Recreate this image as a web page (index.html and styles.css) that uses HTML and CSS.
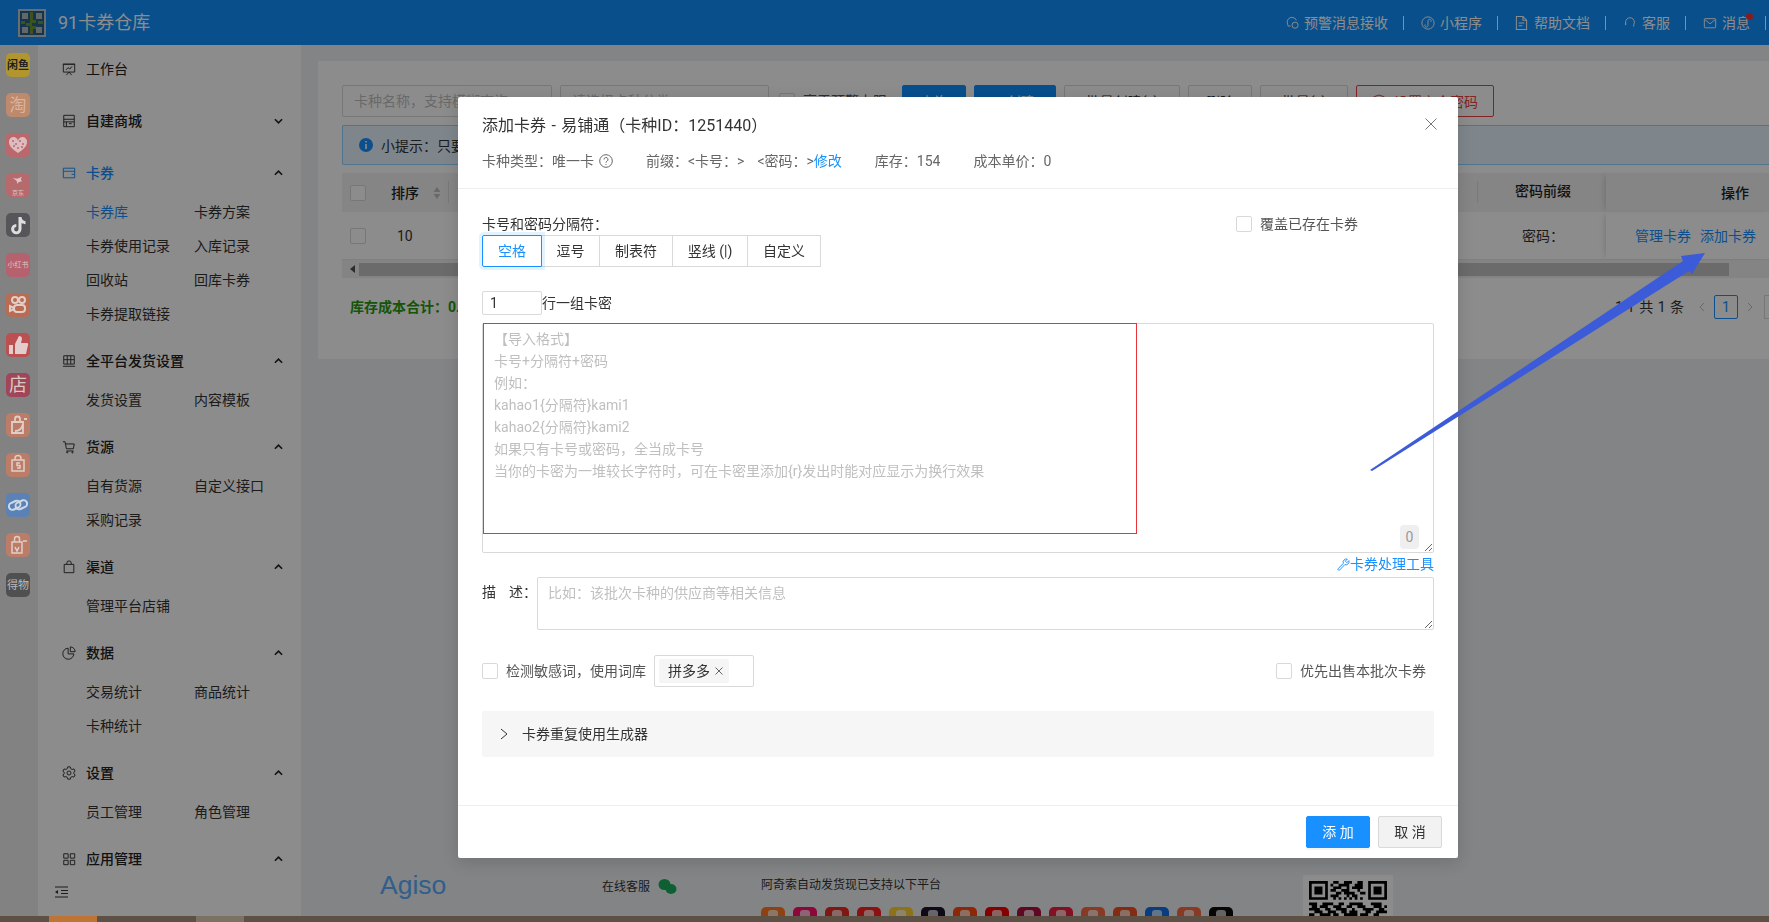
FILE: index.html
```html
<!DOCTYPE html>
<html lang="zh-CN">
<head>
  <meta charset="UTF-8">
  <title>91卡券仓库</title>
  <link rel="stylesheet" href="styles.css">
</head>
<body>

  <div class="page">
    <!-- Top bar -->
    <header class="topbar">
      <div class="brand">
        <svg class="brand-logo" viewBox="0 0 28 28">
          <rect width="28" height="28" fill="#c4c9cc"/>
          <path d="M2 2h24v24H2z" fill="#26618f"/>
          <path d="M4 4h6v6H4zM18 4h6v6h-6zM4 18h6v6H4zM18 18h6v6h-6z" fill="#b5bcc2"/>
          <path d="M12 3h3v8h3v3h-4v3h4v3h-3v5h-3v-8H8v-3h4zM20 12h5v3h-5zM3 12h4v3H3z" fill="#6d9a32"/>
        </svg>
        <span class="brand-name">91卡券仓库</span>
      </div>
      <nav class="topnav">
        <a><svg class="ico" viewBox="0 0 16 16"><path d="M8 1.500a5.500 5.500 0 0 0-5.500 5.500c0 2 1 3.300 1 4.500h3M8 1.500a5.500 5.500 0 0 1 5 3.500"/><circle cx="11.500" cy="10.500" r="3.500"/><path d="M10 10.500h.01M13 10.500h.01"/></svg>预警消息接收</a>
        <a><svg class="ico" viewBox="0 0 16 16"><circle cx="8" cy="8" r="7"/><path d="M5 9.500a1.800 1.800 0 1 0 3 1.300V5.500a1.800 1.800 0 1 1 3 1.300"/></svg>小程序</a>
        <a><svg class="ico ico-doc" viewBox="0 0 14 16"><path d="M1.500 1h7l4 4v10h-11zM8.500 1v4h4M4 8h6M4 11h4"/></svg>帮助文档</a>
        <a><svg class="ico" viewBox="0 0 14 16"><path d="M2 10V7a5 5 0 0 1 10 0c0 2-1 3-1 5"/><path d="M2 7.500v3"/></svg>客服</a>
        <a class="msg"><svg class="ico" viewBox="0 0 16 16"><rect x="1.500" y="3" width="13" height="10.500" rx="1"/><path d="M2 4l6 5 6-5"/></svg>消息<i class="dot"></i></a>
      </nav>
    </header>

    <div class="layout">
      <!-- Platform icons -->
      <div class="platforms">
        <span class="plat plat-xy">闲鱼</span>
        <span class="plat plat-tb">淘</span>
        <span class="plat plat-hb"><svg viewBox="0 0 24 24"><path d="M12 20C6 16 3 13 3 9a4.500 4.500 0 0 1 9-1 4.500 4.500 0 0 1 9 1c0 4-3 7-9 11z" fill="#dcbcbe"/><path d="M7 8h.01M10 11h.01M14 8h.01M17 11h.01M12 15h.01M8 13h.01M16 14h.01" stroke="#bb686c" stroke-width="2" stroke-linecap="round"/></svg></span>
        <span class="plat plat-jd"><svg viewBox="0 0 24 24"><path d="M4 6l7 1 7-3-2 4 2 3-5 1-2 3-1-5z" fill="#dcc6c6"/></svg><b>京东</b></span>
        <span class="plat plat-dy"><svg viewBox="0 0 24 24"><path d="M12.500 4h3c.3 2.500 1.800 4 4 4.300v3c-1.500 0-3-.4-4-1.200v6a5.200 5.200 0 1 1-5.200-5.200v3.100a2.200 2.200 0 1 0 2.200 2.100z" fill="#ddd"/></svg></span>
        <span class="plat plat-xhs">小红书</span>
        <span class="plat plat-ks"><svg viewBox="0 0 24 24" fill="none" stroke="#e2cec6" stroke-width="2"><circle cx="9" cy="7" r="3"/><circle cx="16" cy="7" r="3"/><rect x="8" y="12" width="11" height="7" rx="3"/><path d="M8 15l-4-2v5l4-2"/></svg></span>
        <span class="plat plat-zan"><svg viewBox="0 0 24 24"><path d="M9 11l4-8c2 0 3 1 3 3l-1 4h6c1 0 1.500 1 1 2l-2 9H9zM3 12h4v9H3z" fill="#e2cccc"/></svg></span>
        <span class="plat plat-dian">店</span>
        <span class="plat plat-bag"><svg viewBox="0 0 24 24" fill="none" stroke="#e2cec6" stroke-width="1.800"><path d="M6 9h11v11H6zM9 9V6a2.500 2.500 0 0 1 5 0v3M9 18c4 0 7-3 8-7M18 6h3"/></svg></span>
        <span class="plat plat-sp"><svg viewBox="0 0 24 24" fill="none" stroke="#e2cec6" stroke-width="1.500"><path d="M6 7h12v11H6zM9 7V5.500a3 3 0 0 1 6 0V7M14 10h-3v2.500h3V15h-3"/></svg></span>
        <span class="plat plat-lk"><svg viewBox="0 0 24 24" fill="none" stroke="#d0dae6" stroke-width="2"><rect x="2.500" y="9" width="12" height="7" rx="3.500" transform="rotate(-25 8 12)"/><rect x="9.500" y="8" width="12" height="7" rx="3.500" transform="rotate(-25 16 12)"/></svg></span>
        <span class="plat plat-bag"><svg viewBox="0 0 24 24" fill="none" stroke="#e2cec6" stroke-width="1.500"><path d="M6 9h10v11H6zM8.500 9V6a2.500 2.500 0 0 1 5 0v3M9 14l2 4 2-4M17 8h4"/></svg></span>
        <span class="plat plat-dw">得物</span>
      </div>

      <!-- Side menu -->
      <aside class="sidebar">
        <div class="menu-group">
          <div class="menu-head plain"><svg class="ico" viewBox="0 0 16 16"><path d="M1.500 2.500h13v9h-13zM1 2.500h14M5 15l3-3.500 3 3.500M4.500 9l2.500-2.500 2 1.500 2.500-3"/></svg>工作台</div>
        </div>
        <div class="menu-group">
          <div class="menu-head"><svg class="ico" viewBox="0 0 16 16"><path d="M2 1.500h12v13H2zM2 6h12M2 9h12M5 9v5.500M8 11h3"/></svg>自建商城<svg class="chev" viewBox="0 0 10 6"><path d="M1 1l4 4 4-4"/></svg></div>
        </div>
        <div class="menu-group">
          <div class="menu-head active"><svg class="ico" viewBox="0 0 16 16"><path d="M1.500 2.500h13v11h-13zM1.500 6h13M11 9.500h3"/></svg>卡券<svg class="chev" viewBox="0 0 10 6"><path d="M1 5l4-4 4 4"/></svg></div>
          <div class="submenu">
            <a class="active">卡券库</a><a>卡券方案</a>
            <a>卡券使用记录</a><a>入库记录</a>
            <a>回收站</a><a>回库卡券</a>
            <a>卡券提取链接</a>
          </div>
        </div>
        <div class="menu-group">
          <div class="menu-head"><svg class="ico" viewBox="0 0 16 16"><path d="M2 2h12v9.500H2zM2 6.500h12M6 2v9.500M10 2v9.500M1 14h14"/></svg>全平台发货设置<svg class="chev" viewBox="0 0 10 6"><path d="M1 5l4-4 4 4"/></svg></div>
          <div class="submenu">
            <a>发货设置</a><a>内容模板</a>
          </div>
        </div>
        <div class="menu-group">
          <div class="menu-head"><svg class="ico" viewBox="0 0 16 16"><path d="M1 2h2.500l1.500 8h8l1-5.500H4M5 12.500h8"/><circle cx="6" cy="14" r=".8"/><circle cx="12" cy="14" r=".8"/></svg>货源<svg class="chev" viewBox="0 0 10 6"><path d="M1 5l4-4 4 4"/></svg></div>
          <div class="submenu">
            <a>自有货源</a><a>自定义接口</a>
            <a>采购记录</a>
          </div>
        </div>
        <div class="menu-group">
          <div class="menu-head"><svg class="ico" viewBox="0 0 16 16"><path d="M2.500 5h11v9.500h-11zM5.500 5V3.500a2.500 2.500 0 0 1 5 0V5"/></svg>渠道<svg class="chev" viewBox="0 0 10 6"><path d="M1 5l4-4 4 4"/></svg></div>
          <div class="submenu">
            <a>管理平台店铺</a>
          </div>
        </div>
        <div class="menu-group">
          <div class="menu-head"><svg class="ico" viewBox="0 0 16 16"><path d="M7 2.500a6.300 6.300 0 1 0 6.500 6.500H7zM9.500 1a5.500 5.500 0 0 1 5.500 5.500H9.500z"/></svg>数据<svg class="chev" viewBox="0 0 10 6"><path d="M1 5l4-4 4 4"/></svg></div>
          <div class="submenu">
            <a>交易统计</a><a>商品统计</a>
            <a>卡种统计</a>
          </div>
        </div>
        <div class="menu-group">
          <div class="menu-head"><svg class="ico" viewBox="0 0 16 16"><path d="M6.500 1h3l.4 2 1.700 1 2-.7 1.400 2.600-1.500 1.300v1.600l1.500 1.300-1.400 2.600-2-.7-1.700 1-.4 2h-3l-.4-2-1.700-1-2 .7L1 10.100l1.500-1.300V7.200L1 5.900l1.400-2.600 2 .7 1.700-1z"/><circle cx="8" cy="8" r="2.300"/></svg>设置<svg class="chev" viewBox="0 0 10 6"><path d="M1 5l4-4 4 4"/></svg></div>
          <div class="submenu">
            <a>员工管理</a><a>角色管理</a>
          </div>
        </div>
        <div class="menu-group">
          <div class="menu-head"><svg class="ico" viewBox="0 0 16 16"><path d="M2 2h5v5H2zM9.500 2h5v5h-5zM2 9.500h5v5H2zM9.500 9.500h5v5h-5z"/></svg>应用管理<svg class="chev" viewBox="0 0 10 6"><path d="M1 5l4-4 4 4"/></svg></div>
        </div>
        <div class="collapse-btn"><svg viewBox="0 0 13 12"><path d="M0 1h13M6 4.500h7M6 7.500h7M0 11h13"/><path d="M3 4v4L0 6z" fill="#333" stroke="none"/></svg></div>
      </aside>

      <!-- Main content behind the dialog -->
      <main class="main">
        <div class="card">
          <div class="toolbar">
            <div class="fake-input w-name">卡种名称，支持模糊查询</div>
            <div class="fake-input w-type">请选择卡种分类</div>
            <label class="check-label tb-check"><i class="check"></i>高于预警上限</label>
            <button class="btn primary w-search">查询</button>
            <button class="btn primary w-create">+ 创建</button>
            <button class="btn w-batch">批量创建(x)</button>
            <button class="btn w-del">删除</button>
            <button class="btn w-batch2">批量(x)</button>
            <button class="btn danger w-safe"><svg class="shield" viewBox="0 0 14 14"><path d="M7 1l5.500 2v4c0 3-2.500 5-5.500 6-3-1-5.500-3-5.500-6V3z"/></svg>设置安全密码</button>
          </div>
          <div class="alert"><svg class="alert-ico" viewBox="0 0 14 14"><circle cx="7" cy="7" r="7" fill="#1890ff"/><path d="M6.200 3h1.600v1.600H6.200zM6.200 6h1.600v5H6.200z" fill="#fff"/></svg>小提示：只要添加了卡券</div>
          <div class="table">
            <div class="tr th">
              <div><i class="check"></i></div>
              <div class="col-sort">排序<svg class="sort" viewBox="0 0 8 14"><path d="M4 1l3.500 5h-7zM4 13L.5 8h7z"/></svg></div>
              <div></div>
              <div class="col-prefix">密码前缀</div>
              <div class="col-op">操作</div>
            </div>
            <div class="tr td">
              <div><i class="check"></i></div>
              <div class="col-num">10</div>
              <div></div>
              <div class="col-pw">密码：</div>
              <div class="col-op"><a>管理卡券</a><a>添加卡券</a></div>
            </div>
            <div class="hscroll">
              <svg class="hscroll-arrow" viewBox="0 0 5 8"><path d="M5 0v8L0 4z"/></svg>
              <div class="hscroll-thumb"></div>
            </div>
          </div>
          <div class="summary">
            <span class="cost">库存成本合计：0.00</span>
            <div class="pager">
              <span class="pager-total">1-1 共 1 条</span>
              <svg class="pager-arrow" viewBox="0 0 6 10"><path d="M5 1L1 5l4 4"/></svg>
              <span class="pager-num">1</span>
              <svg class="pager-arrow" viewBox="0 0 6 10"><path d="M1 1l4 4-4 4"/></svg>
              <span class="pager-size"></span>
            </div>
          </div>
        </div>

        <footer class="site-footer">
          <div class="agiso">Agiso</div>
          <div class="service">在线客服
            <svg class="wechat" viewBox="0 0 19 15"><ellipse cx="6.500" cy="5.500" rx="6" ry="5.500" fill="#1aaf5d"/><ellipse cx="13" cy="10" rx="5.500" ry="5" fill="#1aaf5d"/></svg>
          </div>
          <div class="support">
            <div class="support-title">阿奇索自动发货现已支持以下平台</div>
            <div class="support-icons">
              <span class="c1"></span><span class="c2"></span><span class="c3"></span><span class="c4"></span><span class="c5"></span>
              <span class="c6"></span><span class="c7"></span><span class="c8"></span><span class="c9"></span><span class="c10"></span>
              <span class="c11"></span><span class="c12"></span><span class="c13"></span><span class="c11"></span><span class="c14"></span>
            </div>
          </div>
          <div class="qr">
            <svg viewBox="0 0 29 16" fill="none" stroke="#000">
              <path d="M0 .5h7M22 .5h7M0 6.500h7M22 6.500h7M.5 0v7M6.500 0v7M22.500 0v7M28.500 0v7"/>
              <path d="M2 2.500h3M2 3.500h3M2 4.500h3M24 2.500h3M24 3.500h3M24 4.500h3"/>
              <path d="M9 .5h2M13 .5h3M18 .5h2M8 1.500h1M11 1.500h4M17 1.500h3M9 2.500h3M14 2.500h1M16 2.500h4M8 3.500h2M12 3.500h3M18 3.500h1M10 4.500h2M13 4.500h4M19 4.500h2M8 5.500h3M14 5.500h1M16 5.500h2M9 6.500h1M11 6.500h1M13 6.500h1M15 6.500h1M17 6.500h1M19 6.500h1"/>
              <path d="M0 8.500h3M5 8.500h4M11 8.500h2M15 8.500h5M23 8.500h4M1 9.500h2M4 9.500h3M9 9.500h3M14 9.500h2M18 9.500h3M24 9.500h3M28 9.500h1M0 10.500h4M6 10.500h2M10 10.500h4M16 10.500h1M20 10.500h4M26 10.500h2M2 11.500h3M7 11.500h3M12 11.500h2M15 11.500h3M21 11.500h2M25 11.500h4M0 12.500h2M4 12.500h4M9 12.500h2M13 12.500h5M19 12.500h3M24 12.500h2M1 13.500h3M6 13.500h2M10 13.500h3M15 13.500h2M18 13.500h4M23 13.500h3M27 13.500h2M0 14.500h2M3 14.500h3M8 14.500h4M14 14.500h3M19 14.500h2M22 14.500h4M28 14.500h1"/>
            </svg>
          </div>
        </footer>
      </main>
    </div>

    <div class="bottom-bar">
      <i class="seg seg-orange"></i><i class="seg seg-gray"></i>
    </div>
  </div>

  <div class="mask"></div>

  <!-- Add cards dialog -->
  <div class="modal">
    <div class="modal-head">
      <div class="modal-title">添加卡券 - 易铺通（卡种ID：1251440）</div>
      <svg class="modal-close" viewBox="0 0 12 12"><path d="M.5.5l11 11M11.500.5l-11 11"/></svg>
      <div class="modal-info">
        <span class="info-type">卡种类型：唯一卡<svg class="help" viewBox="0 0 14 14"><circle cx="7" cy="7" r="6.300"/><path d="M5 5.500a2 2 0 1 1 3 1.700c-.7.4-1 .8-1 1.500M7 10v.9"/></svg></span>
        <span class="info-prefix">前缀：&lt;卡号：&gt; &lt;密码：&gt;<a class="link">修改</a></span>
        <span>库存：154</span>
        <span>成本单价：0</span>
      </div>
    </div>

    <div class="modal-body">
      <div class="sep-row">
        <div>
          <div class="sep-label">卡号和密码分隔符：</div>
          <div class="radio-group">
            <span class="radio w60 on">空格</span>
            <span class="radio w58">逗号</span>
            <span class="radio w73">制表符</span>
            <span class="radio w75">竖线 (|)</span>
            <span class="radio w73">自定义</span>
          </div>
        </div>
        <label class="check-label overwrite"><i class="check"></i>覆盖已存在卡券</label>
      </div>

      <div class="count-row">
        <input class="count-input" type="text" value="1">
        <span>行一组卡密</span>
      </div>

      <div class="card-area">
        <textarea class="card-text" placeholder="【导入格式】&#10;卡号+分隔符+密码&#10;例如：&#10;kahao1{分隔符}kami1&#10;kahao2{分隔符}kami2&#10;如果只有卡号或密码，全当成卡号&#10;当你的卡密为一堆较长字符时，可在卡密里添加{r}发出时能对应显示为换行效果"></textarea>
        <div class="red-box"></div>
        <span class="char-count">0</span>
      </div>

      <a class="tool-link"><svg class="wrench" viewBox="0 0 14 14"><path d="M12.800 2.800a3.500 3.500 0 0 1-4.500 4.400L3 12.800a1 1 0 0 1-1.700-1.300L6.800 5.700a3.500 3.500 0 0 1 4.300-4.500L9 3.300l1.700 1.700z"/></svg>卡券处理工具</a>

      <div class="desc-row">
        <label class="desc-label"><span>描</span><span>述：</span></label>
        <textarea class="desc-text" placeholder="比如：该批次卡种的供应商等相关信息"></textarea>
      </div>

      <div class="option-row">
        <label class="check-label"><i class="check"></i>检测敏感词，使用词库</label>
        <div class="tag-select">
          <span class="tag">拼多多<svg class="tag-x" viewBox="0 0 8 8"><path d="M.5.5l7 7M7.500.5l-7 7"/></svg></span>
        </div>
        <label class="check-label first-sale"><i class="check"></i>优先出售本批次卡券</label>
      </div>

      <div class="collapse-panel">
        <svg class="panel-arrow" viewBox="0 0 8 12"><path d="M1 1l6 5-6 5"/></svg>
        卡券重复使用生成器
      </div>
    </div>

    <div class="modal-foot">
      <button class="btn-add">添 加</button>
      <button class="btn-cancel">取 消</button>
    </div>
  </div>

  <!-- Annotation arrow drawn over the screenshot -->
  <svg class="note-arrow" viewBox="0 0 1769 922">
    <polygon points="1370,470 1683,261 1681,256 1705,253 1692,274 1689,271 1372,471" fill="#3c5bd8"/>
  </svg>

</body>
</html>
```

FILE: styles.css
```css
* {
  box-sizing: border-box;
}
html, body {
  margin: 0;
  height: 100%;
  overflow: hidden;
}
body {
  font-family: Roboto, "Noto Sans CJK SC", sans-serif;
  font-size: 14px;
  color: #333;
  background: #fff;
}
a {
  text-decoration: none;
}
.page {
  height: 922px;
  display: flex;
  flex-direction: column;
}

/* top bar */
.topbar {
  height: 45px;
  flex: none;
  background: #1090ff;
  display: flex;
  align-items: center;
  justify-content: space-between;
  padding: 0 0 0 18px;
}
.brand {
  display: flex;
  align-items: center;
}
.brand-logo {
  width: 28px;
  height: 28px;
}
.brand-name {
  margin-left: 12px;
  font-size: 18px;
  line-height: 28px;
  color: #fff;
}
.topnav {
  display: flex;
  align-items: center;
  padding-right: 3px;
}
.topnav a {
  display: flex;
  align-items: center;
  height: 14px;
  line-height: 14px;
  padding-right: 15px;
  margin-right: 17px;
  border-right: 1px solid #fff;
  color: #fff;
  position: relative;
}
.topnav a:last-child {
  margin-right: 0;
}
.ico {
  width: 14px;
  height: 14px;
  flex: none;
  fill: none;
  stroke: currentColor;
  stroke-width: 1.1;
}
.topnav .ico {
  margin-right: 5px;
}
.topnav .ico-doc {
  height: 16px;
  width: 13px;
  margin-right: 6px;
}
.dot {
  position: absolute;
  top: -3px;
  right: 12px;
  width: 7px;
  height: 7px;
  border-radius: 50%;
  background: #ff3030;
}

/* layout */
.layout {
  flex: 1;
  display: flex;
  min-height: 0;
}

/* platform strip sits above the dim layer with its own muted colours */
.platforms {
  width: 38px;
  flex: none;
  position: relative;
  z-index: 20;
  background: #828282;
  display: flex;
  flex-direction: column;
  gap: 16px;
  padding: 8px 0 0 6px;
}
.plat {
  width: 24px;
  height: 24px;
  border-radius: 5px;
  display: flex;
  flex-direction: column;
  align-items: center;
  justify-content: center;
  color: #dcc8be;
  font-size: 17px;
  line-height: 1;
  overflow: hidden;
}
.plat svg {
  width: 24px;
  height: 24px;
  flex: none;
}
.plat-xy {
  background: #b0962c;
  color: #222;
  font-size: 11px;
  font-weight: 700;
  white-space: nowrap;
}
.plat-tb {
  background: #bf8a6c;
  color: #dab49e;
}
.plat-hb {
  background: #bb686c;
}
.plat-jd {
  background: #b76a6c;
  position: relative;
}
.plat-jd svg {
  height: 16px;
  width: 16px;
}
.plat-jd b {
  font-size: 6px;
  font-weight: 400;
}
.plat-dy {
  background: #56565a;
}
.plat-xhs {
  background: #b5626e;
  font-size: 7px;
  white-space: nowrap;
}
.plat-ks {
  background: #b86c54;
}
.plat-zan {
  background: #bc4f50;
}
.plat-dian {
  background: #a0465a;
  font-size: 18px;
}
.plat-bag {
  background: #bb7c68;
}
.plat-sp {
  background: #bb7c68;
}
.plat-lk {
  background: #5a82b6;
}
.plat-dw {
  background: #505050;
  color: #bbb;
  font-size: 11px;
  white-space: nowrap;
}

/* side menu */
.sidebar {
  width: 263px;
  flex: none;
  background: #fff;
  padding-top: 7px;
  position: relative;
}
.menu-group {
  margin-bottom: 18px;
}
.menu-head {
  height: 34px;
  display: flex;
  align-items: center;
  padding: 0 18px 2px 24px;
  font-weight: 500;
  color: #222;
}
.menu-head.plain {
  font-weight: 400;
}
.menu-head .ico {
  margin-right: 10px;
  margin-top: 2px;
  color: #333;
}
.menu-head.active,
.menu-head.active .ico {
  color: #1890ff;
}
.chev {
  width: 9px;
  height: 6px;
  margin-left: auto;
  margin-top: 2px;
  fill: none;
  stroke: #222;
  stroke-width: 1.800;
}
.submenu {
  display: grid;
  grid-template-columns: 108px 108px;
  padding-left: 48px;
  margin: 5px 0 -5px;
}
.submenu a {
  height: 34px;
  line-height: 34px;
  color: #333;
}
.submenu a.active {
  color: #1890ff;
}
.collapse-btn {
  position: absolute;
  left: 17px;
  top: 841px;
}
.collapse-btn svg {
  display: block;
  width: 13px;
  height: 12px;
  fill: none;
  stroke: #333;
}

/* main area */
.main {
  flex: 1;
  min-width: 0;
  background: #eff1f3;
  padding: 16px 0 0 17px;
  overflow: hidden;
}
.card {
  height: 298px;
  background: #fff;
  padding: 24px 0 0 24px;
}
.toolbar {
  display: flex;
  align-items: center;
  height: 32px;
}
.fake-input {
  height: 32px;
  line-height: 30px;
  padding: 0 11px;
  border: 1px solid #d9d9d9;
  border-radius: 2px;
  color: #bfbfbf;
}
.w-name {
  width: 210px;
  margin-right: 8px;
}
.w-type {
  width: 209px;
  margin-right: 10px;
}
.tb-check {
  width: 123px;
}
.btn {
  height: 32px;
  padding: 0;
  border: 1px solid #d9d9d9;
  border-radius: 2px;
  background: #fff;
  color: #333;
  font: inherit;
}
.btn.primary {
  background: #1090ff;
  border-color: #1090ff;
  color: #fff;
}
.btn.danger {
  border-color: #f04040;
  color: #f04040;
  display: flex;
  align-items: center;
  justify-content: center;
}
.shield {
  width: 14px;
  height: 14px;
  margin-right: 8px;
  fill: none;
  stroke: #f04040;
}
.w-search {
  width: 64px;
  margin-right: 8px;
}
.w-create {
  width: 82px;
  margin-right: 8px;
}
.w-batch {
  width: 116px;
  margin-right: 8px;
}
.w-del {
  width: 64px;
  margin-right: 8px;
}
.w-batch2 {
  width: 88px;
  margin-right: 8px;
}
.w-safe {
  width: 138px;
}
.alert {
  height: 40px;
  margin-top: 8px;
  display: flex;
  align-items: center;
  padding-left: 16px;
  background: #e6f4ff;
  border: 1px solid #91d5ff;
  border-right: 0;
  border-radius: 2px 0 0 2px;
}
.alert-ico {
  width: 14px;
  height: 14px;
  margin-right: 8px;
}
.table {
  margin-top: 8px;
}
.tr {
  display: grid;
  grid-template-columns: 40px 67px 1fr 129px 163px;
  align-items: center;
}
.th {
  height: 39px;
  background: #f2f2f2;
  font-weight: 500;
  color: #222;
}
.td {
  height: 48px;
  border-bottom: 1px solid #e8e8e8;
}
.tr > div:first-child {
  padding-left: 8px;
  display: flex;
}
.check {
  display: inline-block;
  width: 16px;
  height: 16px;
  flex: none;
  background: #fff;
  border: 1px solid #d9d9d9;
  border-radius: 2px;
}
.col-sort {
  display: flex;
  align-items: center;
  height: 100%;
  padding: 0 0 2px 9px;
  position: relative;
}
.sort {
  width: 8px;
  height: 14px;
  margin-left: 14px;
  margin-top: 2px;
  fill: #bfbfbf;
}
.col-sort::after,
.col-prefix::before,
.col-prefix::after {
  content: "";
  position: absolute;
  width: 1px;
  height: 22px;
  top: 8px;
  background: #ddd;
}
.col-sort::after {
  right: 0;
}
.col-prefix {
  position: relative;
  height: 100%;
  line-height: 37px;
  padding-left: 38px;
}
.col-prefix::before {
  left: 0;
}
.col-prefix::after {
  right: 0;
}
.col-num {
  padding-left: 15px;
}
.col-pw {
  padding: 0 0 2px 45px;
}
.col-op {
  height: 100%;
  display: flex;
  align-items: center;
  justify-content: flex-end;
  padding-bottom: 2px;
  box-shadow: -4px 0 6px -3px rgba(0, 0, 0, 0.15);
}
.th .col-op {
  padding-right: 20px;
}
.td .col-op {
  padding-right: 13px;
  gap: 9px;
}
.col-op a {
  color: #1890ff;
}
.hscroll {
  height: 18px;
  background: #f1f1f1;
  display: flex;
  align-items: center;
  padding-left: 8px;
}
.hscroll-arrow {
  width: 5px;
  height: 8px;
  fill: #505050;
}
.hscroll-thumb {
  width: 1370px;
  height: 13px;
  margin-left: 4px;
  background: #c4c4c4;
}
.summary {
  margin-top: 17px;
  height: 24px;
  display: flex;
  align-items: center;
  justify-content: space-between;
  padding-left: 8px;
}
.cost {
  color: #2a9a10;
  font-weight: 700;
  padding-bottom: 2px;
}
.pager {
  display: flex;
  align-items: center;
}
.pager-total {
  margin-right: 15px;
  padding-bottom: 2px;
  word-spacing: 1px;
}
.pager-arrow {
  width: 6px;
  height: 10px;
  fill: none;
  stroke: #bfbfbf;
}
.pager-num {
  width: 24px;
  height: 24px;
  line-height: 22px;
  margin: 0 9px;
  text-align: center;
  border: 1px solid #1890ff;
  border-radius: 2px;
  color: #1890ff;
}
.pager-size {
  width: 60px;
  height: 24px;
  margin-left: 11px;
  margin-right: -55px;
  border: 1px solid #d9d9d9;
}

/* page footer behind the dim layer */
.site-footer {
  margin-top: 511px;
  padding-left: 62px;
  display: grid;
  grid-template-columns: 222px 159px 542px 90px;
  align-items: start;
}
.agiso {
  font-family: "Liberation Sans", sans-serif;
  font-size: 26.5px;
  line-height: 30px;
  color: #5aacff;
}
.service {
  margin-top: 9px;
  font-size: 12px;
  line-height: 16px;
  display: flex;
  align-items: center;
  white-space: nowrap;
}
.wechat {
  width: 19px;
  height: 15px;
  margin-left: 8px;
  margin-top: -2px;
}
.support {
  margin-top: 7px;
}
.support-title {
  font-size: 12px;
  line-height: 16px;
}
.support-icons {
  display: flex;
  gap: 8px;
  margin-top: 14px;
}
.support-icons span {
  width: 24px;
  height: 24px;
  border-radius: 5px;
  position: relative;
}
.support-icons span::before {
  content: "";
  position: absolute;
  left: 7px;
  top: 3px;
  width: 10px;
  height: 10px;
  border-radius: 3px;
  background: rgba(255, 255, 255, 0.7);
}
.c1 { background: #ff7a1f; }
.c2 { background: #ff0f6a; }
.c3 { background: #e82a22; }
.c4 { background: #ff2020; }
.c5 { background: #ffd22e; }
.c6 { background: #1c1428; }
.c7 { background: #ff4a10; }
.c8 { background: #f40000; }
.c9 { background: #b01040; }
.c10 { background: #f02040; }
.c11 { background: #f86a44; }
.c12 { background: #f05020; }
.c13 { background: #1070e8; }
.c14 { background: #0c0c0c; }
.qr {
  margin-top: 5px;
  width: 90px;
  height: 60px;
  padding: 6px;
  background: #fff;
}
.qr svg {
  display: block;
  width: 78px;
  height: 43px;
  stroke-width: 1;
}

.bottom-bar {
  height: 6px;
  flex: none;
  background: #5c5144;
  position: relative;
  z-index: 20;
  display: flex;
  padding-left: 49px;
}
.seg {
  display: block;
  width: 48px;
  height: 6px;
}
.seg-orange {
  background: #bd7434;
  margin-right: 99px;
}
.seg-gray {
  background: #7c7263;
}

/* dim layer */
.mask {
  position: fixed;
  inset: 0;
  background: rgba(0, 0, 0, 0.45);
  z-index: 10;
}

/* dialog */
.modal {
  position: absolute;
  left: 458px;
  top: 97px;
  width: 1000px;
  height: 761px;
  z-index: 30;
  background: #fff;
  border-radius: 2px;
  box-shadow: 0 4px 16px rgba(0, 0, 0, 0.15);
  display: flex;
  flex-direction: column;
}
.modal-head {
  height: 92px;
  flex: none;
  padding: 17px 24px 0;
  border-bottom: 1px solid #eee;
  position: relative;
}
.modal-title {
  font-size: 16px;
  line-height: 24px;
  color: #333;
  word-spacing: 1.5px;
}
.modal-close {
  position: absolute;
  right: 21px;
  top: 21px;
  width: 12px;
  height: 12px;
  fill: none;
  stroke: #777;
}
.modal-info {
  margin-top: 12px;
  display: flex;
  gap: 33px;
  color: #666;
  line-height: 22px;
}
.info-type {
  display: flex;
  align-items: center;
}
.info-prefix {
  word-spacing: 9.5px;
}
.help {
  width: 14px;
  height: 14px;
  margin-left: 5px;
  fill: none;
  stroke: #666;
}
.link {
  color: #1890ff;
}
.modal-body {
  flex: 1;
  padding: 24px 24px 0;
}
.sep-row {
  display: flex;
  justify-content: space-between;
}
.sep-label {
  line-height: 22px;
}
.radio-group {
  display: flex;
}
.radio {
  height: 32px;
  line-height: 30px;
  text-align: center;
  border: 1px solid #d9d9d9;
  border-left: 0;
  color: #333;
}
.radio.on {
  border: 1px solid #1890ff;
  border-radius: 2px 0 0 2px;
  color: #1890ff;
  box-shadow: 0 0 0 3px rgba(24, 144, 255, 0.12);
  position: relative;
}
.w60 { width: 60px; }
.w58 { width: 58px; }
.w73 { width: 73px; }
.w75 { width: 75px; }
.check-label {
  display: flex;
  align-items: center;
  gap: 8px;
  padding-bottom: 2px;
  color: #555;
  white-space: nowrap;
}
.check-label .check {
  margin-top: 2px;
}
.overwrite {
  align-self: flex-start;
  height: 22px;
  margin-right: 76px;
}
.count-row {
  margin-top: 24px;
  display: flex;
  align-items: center;
}
.count-row span {
  padding-bottom: 2px;
}
.count-input {
  width: 60px;
  height: 24px;
  padding: 0 7px;
  border: 1px solid #d9d9d9;
  border-radius: 2px;
  font: inherit;
  color: #333;
}
.card-area {
  margin-top: 8px;
  position: relative;
  height: 230px;
}
.card-text,
.desc-text {
  display: block;
  width: 100%;
  height: 100%;
  padding: 4px 11px;
  border: 1px solid #d9d9d9;
  border-radius: 2px;
  font: inherit;
  line-height: 22px;
  color: #333;
  outline: none;
}
.card-text::placeholder,
.desc-text::placeholder {
  color: #bfbfbf;
  opacity: 1;
}
.red-box {
  position: absolute;
  left: 1px;
  top: 0;
  width: 654px;
  height: 211px;
  border: 1px solid #e8343a;
  pointer-events: none;
}
.char-count {
  position: absolute;
  right: 15px;
  bottom: 4px;
  width: 19px;
  height: 24px;
  line-height: 25px;
  text-align: center;
  background: #efefef;
  border-radius: 4px;
  color: #999;
}
.tool-link {
  display: flex;
  justify-content: flex-end;
  align-items: center;
  height: 22px;
  line-height: 22px;
  color: #1890ff;
}
.wrench {
  width: 13px;
  height: 13px;
  fill: none;
  stroke: #1890ff;
}
.desc-row {
  margin-top: 2px;
  height: 53px;
  display: flex;
}
.desc-label {
  width: 55px;
  flex: none;
  display: flex;
  justify-content: space-between;
  height: 30px;
  line-height: 30px;
}
.desc-text {
  padding: 4px 10px;
}
.option-row {
  margin-top: 25px;
  height: 32px;
  display: flex;
  align-items: center;
}
.tag-select {
  width: 100px;
  height: 32px;
  margin-left: 8px;
  padding: 3px 4px;
  border: 1px solid #d9d9d9;
  border-radius: 2px;
}
.tag {
  display: flex;
  align-items: center;
  width: 70px;
  height: 24px;
  padding: 0 0 2px 9px;
  background: #f5f5f5;
  border-radius: 2px;
}
.tag-x {
  width: 8px;
  height: 8px;
  margin-left: 5px;
  margin-top: 2px;
  fill: none;
  stroke: #666;
}
.first-sale {
  margin-left: auto;
  margin-right: 8px;
}
.collapse-panel {
  margin-top: 24px;
  height: 46px;
  display: flex;
  align-items: center;
  padding: 0 0 2px 18px;
  background: #f6f6f6;
  border-radius: 2px;
  color: #333;
}
.panel-arrow {
  width: 8px;
  height: 12px;
  margin-right: 14px;
  margin-top: 2px;
  fill: none;
  stroke: #333;
}
.modal-foot {
  height: 53px;
  flex: none;
  border-top: 1px solid #eee;
  display: flex;
  justify-content: flex-end;
  gap: 8px;
  padding: 10px 16px 0 0;
}
.btn-add,
.btn-cancel {
  width: 64px;
  height: 32px;
  border-radius: 2px;
  font: inherit;
  padding: 0 0 2px;
}
.btn-add {
  background: #1890ff;
  border: 1px solid #1890ff;
  color: #fff;
  box-shadow: 0 2px 0 rgba(0, 0, 0, 0.045);
}
.btn-cancel {
  background: #f2f2f2;
  border: 1px solid #d9d9d9;
  color: #333;
}

/* annotation over everything */
.note-arrow {
  position: fixed;
  left: 0;
  top: 0;
  width: 1769px;
  height: 922px;
  z-index: 40;
  pointer-events: none;
}
```
